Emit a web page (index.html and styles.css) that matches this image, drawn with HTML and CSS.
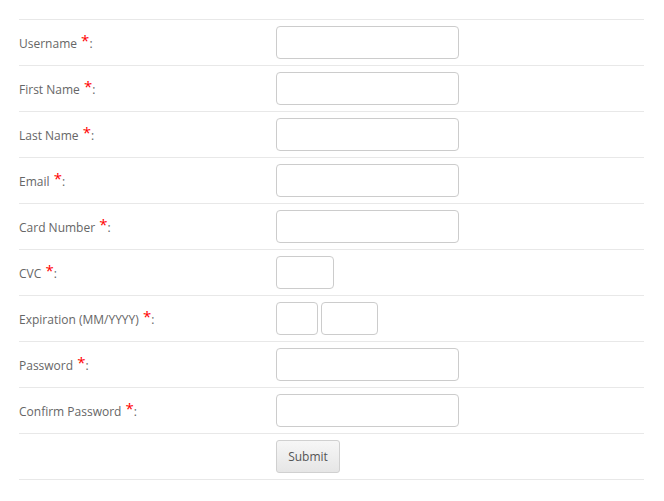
FILE: index.html
```html
<!DOCTYPE html>
<html>
<head>
<meta charset="utf-8">
<link rel="stylesheet" href="styles.css">
</head>
<body>
<form class="form">
  <div class="row"><label class="lbl">Username <span class="req">*</span>:</label><div class="field"><input class="inp" type="text"></div></div>
  <div class="row"><label class="lbl">First Name <span class="req">*</span>:</label><div class="field"><input class="inp" type="text"></div></div>
  <div class="row"><label class="lbl">Last Name <span class="req">*</span>:</label><div class="field"><input class="inp" type="text"></div></div>
  <div class="row"><label class="lbl">Email <span class="req">*</span>:</label><div class="field"><input class="inp" type="text"></div></div>
  <div class="row"><label class="lbl">Card Number <span class="req">*</span>:</label><div class="field"><input class="inp" type="text"></div></div>
  <div class="row"><label class="lbl">CVC <span class="req">*</span>:</label><div class="field"><input class="inp cvc" type="text"></div></div>
  <div class="row"><label class="lbl">Expiration (MM/YYYY) <span class="req">*</span>:</label><div class="field"><input class="inp mm" type="text"><input class="inp yy" type="text"></div></div>
  <div class="row"><label class="lbl">Password <span class="req">*</span>:</label><div class="field"><input class="inp" type="password"></div></div>
  <div class="row"><label class="lbl">Confirm Password <span class="req">*</span>:</label><div class="field"><input class="inp" type="password"></div></div>
  <div class="row last"><div class="lbl"></div><div class="field"><button class="btn" type="button">Submit</button></div></div>
</form>
</body>
</html>
```

FILE: styles.css
```css
html, body {
  margin: 0;
  padding: 0;
  background: #fff;
}
body {
  font-family: "Open Sans", "Liberation Sans", sans-serif;
  font-size: 12px;
  color: #666;
}
.form {
  width: 625px;
  margin: 19px 0 0 19px;
}
.row {
  display: flex;
  align-items: center;
  height: 45px;
  border-top: 1px solid #e8e8e8;
}
.row.last {
  border-bottom: 1px solid #e8e8e8;
}
.lbl {
  width: 257px;
  flex: none;
  line-height: 18px;
  padding-top: 1px;
}
.req {
  color: #f00;
  font-size: 15px;
  position: relative;
  top: -2px;
  margin-left: 1px;
}
.field {
  display: flex;
  gap: 3px;
  align-items: center;
  padding-bottom: 1px;
}
.inp {
  box-sizing: border-box;
  width: 183px;
  height: 33px;
  margin: 0;
  border: 1px solid #ccc;
  border-radius: 4px;
  background: #fff;
  padding: 4px 6px;
  font-family: inherit;
  font-size: 12px;
}
.inp.cvc { width: 58px; }
.inp.mm { width: 42px; }
.inp.yy { width: 57px; }
.btn {
  box-sizing: border-box;
  width: 64px;
  height: 33px;
  margin: 0;
  border: 1px solid #d0d0d0;
  border-radius: 3px;
  background: linear-gradient(#f6f6f6, #e6e6e6);
  font-family: inherit;
  font-size: 12px;
  color: #555;
  padding: 0;
}
```
